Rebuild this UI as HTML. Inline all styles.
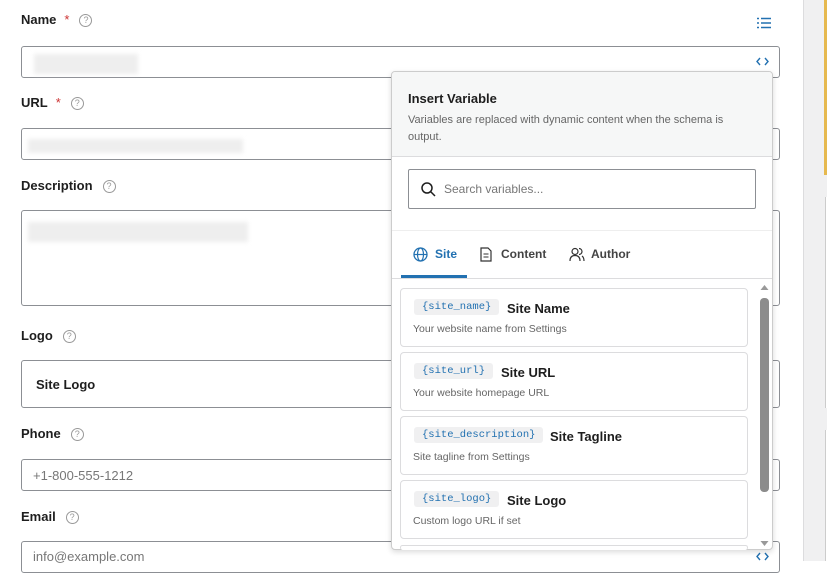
<!DOCTYPE html>
<html><head><style>
*{box-sizing:border-box;margin:0;padding:0}
body{width:827px;height:561px;overflow:hidden;background:#fff;font-family:"Liberation Sans",sans-serif;position:relative;color:#1e1e1e}
.a{position:absolute}
.lbl{font-size:13px;font-weight:bold;color:#1e1e1e}
.star{color:#c33;font-weight:normal;margin-left:8px}
.q{display:inline-block;width:13px;height:13px;border:1px solid #999;border-radius:50%;font-size:9px;color:#999;text-align:center;line-height:11px;font-weight:normal;margin-left:10px;vertical-align:1px}
.inp{border:1px solid #8c8f94;border-radius:3px;left:21px;width:759px}
.blur{background:#eeeeee;filter:blur(2px)}
.item{left:400px;width:348px;border:1px solid #dcdcde;border-radius:4px;background:#fff}
.code{position:absolute;left:13px;top:10px;background:#f0f0f1;color:#2271b1;font-family:"Liberation Mono",monospace;font-size:10.5px;padding:2px 8px;border-radius:3px}
.tt{position:absolute;top:12px;font-size:13px;font-weight:bold;color:#1e1e1e}
.dd{position:absolute;left:12px;top:34px;font-size:10.5px;color:#666}
</style></head><body>
<div class="a" style="left:803px;top:0;width:24px;height:561px;background:#f0f0f1;border-left:1px solid #dcdcde"></div>
<div class="a" style="left:824px;top:0;width:3px;height:175px;background:#e6b94f"></div>
<div class="a" style="left:825px;top:197px;width:2px;height:211px;border-left:1px solid #ccc;background:#fff"></div>
<div class="a" style="left:825px;top:430px;width:2px;height:131px;border-left:1px solid #ccc;background:#fff"></div>

<div class="a lbl" style="left:21px;top:12px">Name<span class="star">*</span><span class="q">?</span></div>
<svg class="a" style="left:757px;top:17px" width="14" height="12" viewBox="0 0 14 12"><g stroke="#2271b1" stroke-width="1.4"><path d="M0 1.5h2M4 1.5h10M0 6h2M4 6h10M0 10.5h2M4 10.5h10"/></g></svg>
<div class="a inp" style="top:46px;height:32px"></div>
<div class="a blur" style="left:34px;top:54px;width:104px;height:20px"></div>
<svg class="a" style="left:756px;top:57px" width="13" height="9"><path d="M4 1L1 4.5L4 8M9 1L12 4.5L9 8" stroke="#2271b1" stroke-width="1.4" fill="none"/></svg>

<div class="a lbl" style="left:21px;top:95px">URL<span class="star">*</span><span class="q">?</span></div>
<div class="a inp" style="top:128px;height:32px"></div>
<div class="a blur" style="left:28px;top:139px;width:215px;height:14px"></div>

<div class="a lbl" style="left:21px;top:178px">Description<span class="q">?</span></div>
<div class="a inp" style="top:210px;height:96px"></div>
<div class="a blur" style="left:28px;top:222px;width:220px;height:20px"></div>

<div class="a lbl" style="left:21px;top:328px">Logo<span class="q">?</span></div>
<div class="a inp" style="top:360px;height:48px"></div>
<div class="a" style="left:36px;top:377px;font-size:13px;font-weight:bold">Site Logo</div>

<div class="a lbl" style="left:21px;top:426px">Phone<span class="q">?</span></div>
<div class="a inp" style="top:459px;height:32px"></div>
<div class="a" style="left:33px;top:468px;font-size:13px;color:#777">+1-800-555-1212</div>

<div class="a lbl" style="left:21px;top:509px">Email<span class="q">?</span></div>
<div class="a inp" style="top:541px;height:32px"></div>
<div class="a" style="left:33px;top:549px;font-size:13px;color:#777">info@example.com</div>
<svg class="a" style="left:756px;top:552px" width="13" height="9"><path d="M4 1L1 4.5L4 8M9 1L12 4.5L9 8" stroke="#2271b1" stroke-width="1.4" fill="none"/></svg>

<div class="a" style="left:391px;top:71px;width:382px;height:479px;background:#fff;border:1px solid #ccc;border-radius:4px;box-shadow:0 2px 6px rgba(0,0,0,.15);overflow:hidden">
 <div class="a" style="left:0;top:0;width:380px;height:85px;background:#f6f7f7;border-bottom:1px solid #dcdcde"></div>
 <div class="a" style="left:16px;top:19px;font-size:13px;font-weight:bold">Insert Variable</div>
 <div class="a" style="left:16px;top:40px;width:350px;font-size:11px;line-height:17px;color:#666">Variables are replaced with dynamic content when the schema is output.</div>
 <div class="a" style="left:16px;top:97px;width:348px;height:40px;border:1px solid #8c8f94;border-radius:2px"></div>
 <svg class="a" style="left:29px;top:110px" width="15" height="15"><circle cx="6" cy="6" r="5" stroke="#1e1e1e" stroke-width="1.5" fill="none"/><path d="M9.5 9.5L14 14" stroke="#1e1e1e" stroke-width="1.5"/></svg>
 <div class="a" style="left:52px;top:110px;font-size:12px;color:#777">Search variables...</div>
 <div class="a" style="left:0;top:158px;width:380px;border-top:1px solid #eee"></div>
 <svg class="a" style="left:21px;top:175px" width="15" height="15"><circle cx="7.5" cy="7.5" r="6.5" stroke="#2271b1" stroke-width="1.3" fill="none"/><ellipse cx="7.5" cy="7.5" rx="3" ry="6.5" stroke="#2271b1" stroke-width="1.2" fill="none"/><path d="M1 7.5h13" stroke="#2271b1" stroke-width="1.2"/></svg>
 <div class="a" style="left:43px;top:175px;font-size:12px;color:#2271b1;font-weight:bold">Site</div>
 <svg class="a" style="left:88px;top:175px" width="12" height="15"><path d="M1 1h7l3 3v10H1z" stroke="#333" stroke-width="1.2" fill="none"/><path d="M3.5 7h5M3.5 10h5" stroke="#333" stroke-width="1.1"/></svg>
 <div class="a" style="left:109px;top:175px;font-size:12px;color:#444;font-weight:bold">Content</div>
 <svg class="a" style="left:177px;top:175px" width="16" height="15"><circle cx="6" cy="4.5" r="3" stroke="#333" stroke-width="1.2" fill="none"/><path d="M1 14c0-4 2-5.5 5-5.5s5 1.5 5 5.5M10 1.5a3 3 0 0 1 0 6M13 9c1.5 1 2 2.5 2 5" stroke="#333" stroke-width="1.2" fill="none"/></svg>
 <div class="a" style="left:199px;top:175px;font-size:12px;color:#444;font-weight:bold">Author</div>
 <div class="a" style="left:9px;top:203px;width:66px;height:3px;background:#2271b1"></div>
 <div class="a" style="left:0;top:206px;width:380px;border-top:1px solid #dcdcde"></div>
 <svg class="a" style="left:368px;top:212px" width="9" height="265"><path d="M0.5 6L4.5 1L8.5 6Z" fill="#999"/><rect x="0" y="14" width="9" height="194" rx="4" fill="#8c8c8c"/><path d="M0.5 257L4.5 262L8.5 257Z" fill="#999"/></svg>
</div>
<div class="a item" style="top:288px;height:59px"><span class="code">{site_name}</span><span class="tt" style="left:106px">Site Name</span><span class="dd">Your website name from Settings</span></div>
<div class="a item" style="top:352px;height:59px"><span class="code">{site_url}</span><span class="tt" style="left:100px">Site URL</span><span class="dd">Your website homepage URL</span></div>
<div class="a item" style="top:416px;height:59px"><span class="code">{site_description}</span><span class="tt" style="left:149px">Site Tagline</span><span class="dd">Site tagline from Settings</span></div>
<div class="a item" style="top:480px;height:59px"><span class="code">{site_logo}</span><span class="tt" style="left:106px">Site Logo</span><span class="dd">Custom logo URL if set</span></div>
<div class="a item" style="top:545px;height:5px;border-bottom:0"></div>
</body></html>
